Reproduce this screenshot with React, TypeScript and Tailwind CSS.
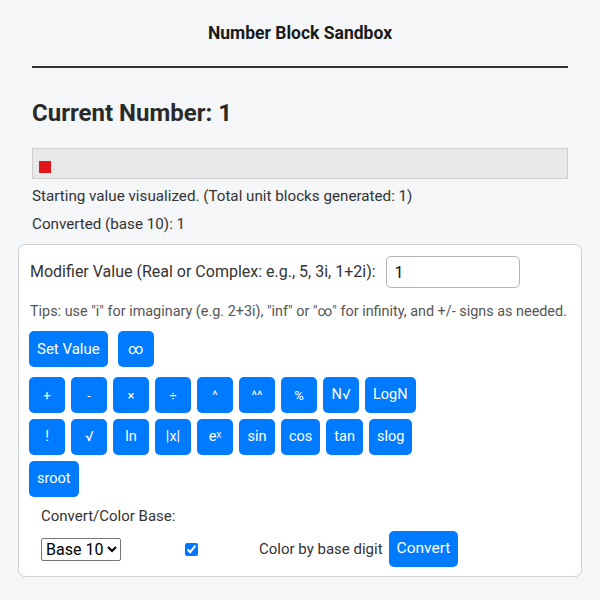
import React from 'react';

const opsRow1 = ['+', '-', '×', '÷', '^', '^^', '%', 'N√', 'LogN'];
const opsRow2 = ['!', '√', 'ln', '|x|', 'eˣ', 'sin', 'cos', 'tan', 'slog'];

function Btn({ children, className = '' }: { children: React.ReactNode; className?: string }) {
  return (
    <button
      type="button"
      className={`flex h-[36px] min-w-[36px] items-center justify-center rounded-[5px] bg-[#007bff] px-[8px] leading-none text-white ${className}`}
    >
      {children}
    </button>
  );
}

export default function App() {
  return (
    <div className="min-h-screen bg-[#f4f6f8] pb-6 text-[#222] [font-family:Roboto,'Liberation_Sans',sans-serif]">
      <div className="flex h-[66px] items-center justify-center">
        <h1 className="text-[17.5px] font-bold text-[#1a1a1a]">Number Block Sandbox</h1>
      </div>
      <div className="mx-[32px] h-[2px] bg-[#333]" />

      <h2 className="mx-[32px] mt-[31px] text-[24px] font-bold leading-[28px] text-[#2a2a2a]">Current Number: 1</h2>

      <div className="mx-[32px] mt-[21px] flex h-[31px] items-end border border-[#cfcfcf] bg-[#e8e8e8] px-[6px] pb-[5px]">
        <span className="block h-[12px] w-[12px] bg-[#e0161b]" />
      </div>

      <p className="mx-[32px] mt-[5px] text-[15.2px] leading-[24px] text-[#333]">
        Starting value visualized. (Total unit blocks generated: 1)
      </p>
      <p className="mx-[32px] mt-[4px] text-[15.2px] leading-[24px] text-[#333]">Converted (base 10): 1</p>

      <div className="mx-[18px] mt-[8px] rounded-[7px] border border-[#cfd3d6] bg-white px-[10px] pb-[9px] pt-[11px]">
        <div className="flex items-center gap-[10px] pl-[1px]">
          <label className="text-[16px] text-[#333]">Modifier Value (Real or Complex: e.g., 5, 3i, 1+2i):</label>
          <input
            defaultValue="1"
            className="h-[32px] w-[134px] rounded-[5px] border border-[#b5b5b5] px-[8px] text-[16px] text-[#111] outline-none"
          />
        </div>

        <p className="mt-[14px] pl-[1px] text-[14.4px] leading-[20px] text-[#555]">
          Tips: use "i" for imaginary (e.g. 2+3i), "inf" or "∞" for infinity, and +/- signs as needed.
        </p>

        <div className="mt-[9px] flex gap-[10px]">
          <Btn className="text-[15px]">Set Value</Btn>
          <Btn className="text-[15px]">∞</Btn>
        </div>

        <div className="mt-[10px] flex flex-col gap-[6px]">
          <div className="flex gap-[6px]">
            {opsRow1.map(op => (
              <Btn key={op} className={op.length === 1 || op === '^^' ? 'text-[13px]' : 'text-[14.5px]'}>
                {op}
              </Btn>
            ))}
          </div>
          <div className="flex gap-[6px]">
            {opsRow2.map(op => (
              <Btn key={op} className="text-[14.5px]">
                {op}
              </Btn>
            ))}
          </div>
          <div className="flex gap-[6px]">
            <Btn className="text-[14.5px]">sroot</Btn>
          </div>
        </div>

        <div className="px-[12px]">
          <p className="mt-[8px] text-[15px] leading-[22px] text-[#333]">Convert/Color Base:</p>
          <div className="mt-[4px] flex h-[36px] items-center">
            <select className="h-[23px] w-[80px] rounded-[2px] border border-[#767676] bg-white text-[16px] text-black">
              <option>Base 10</option>
            </select>
            <input type="checkbox" defaultChecked className="ml-[64px] h-[13px] w-[13px] accent-[#0075ff]" />
            <span className="ml-[61px] text-[15px] text-[#333]">Color by base digit</span>
            <Btn className="ml-[6px] text-[15.5px]">Convert</Btn>
          </div>
        </div>
      </div>
    </div>
  );
}
